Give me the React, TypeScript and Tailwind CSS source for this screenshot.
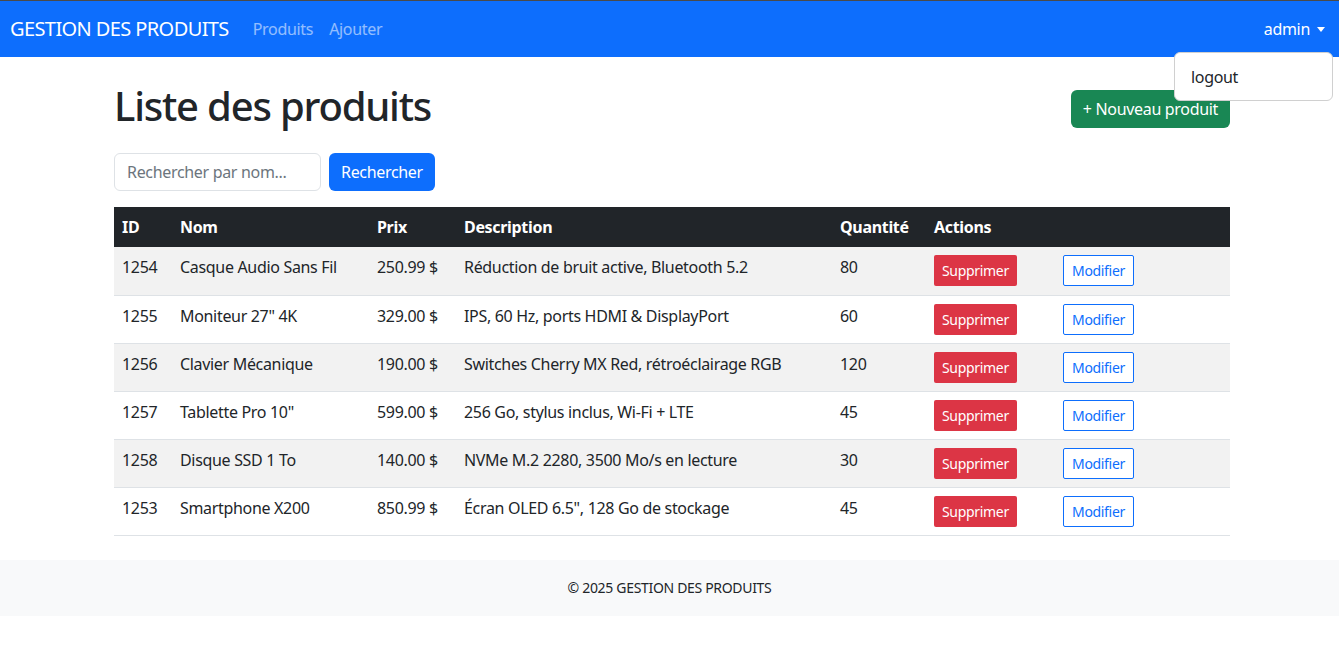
const produits = [
  { id: 1254, nom: "Casque Audio Sans Fil", prix: "250.99 $", description: "Réduction de bruit active, Bluetooth 5.2", quantite: 80 },
  { id: 1255, nom: 'Moniteur 27" 4K', prix: "329.00 $", description: "IPS, 60 Hz, ports HDMI & DisplayPort", quantite: 60 },
  { id: 1256, nom: "Clavier Mécanique", prix: "190.00 $", description: "Switches Cherry MX Red, rétroéclairage RGB", quantite: 120 },
  { id: 1257, nom: 'Tablette Pro 10"', prix: "599.00 $", description: "256 Go, stylus inclus, Wi-Fi + LTE", quantite: 45 },
  { id: 1258, nom: "Disque SSD 1 To", prix: "140.00 $", description: "NVMe M.2 2280, 3500 Mo/s en lecture", quantite: 30 },
  { id: 1253, nom: "Smartphone X200", prix: "850.99 $", description: 'Écran OLED 6.5", 128 Go de stockage', quantite: 45 },
];

export default function App() {
  return (
    <div className="min-h-screen bg-white text-[#212529] font-['Noto_Sans',sans-serif] text-[16px] tracking-[-0.02em]">
      {/* Navbar */}
      <header className="relative border-t border-[#4a4a4a] bg-[#0d6efd]">
        <nav className="h-[56px] px-[10px] flex items-center justify-between">
          <div className="flex items-center">
            <span className="text-white text-[20px] mr-[24px] tracking-[-0.03em]">GESTION DES PRODUITS</span>
            <a className="text-white/55 mr-[16px]">Produits</a>
            <a className="text-white/55">Ajouter</a>
          </div>
          <div className="flex items-center gap-[7px] pr-[4px] text-white">
            admin
            <span className="w-0 h-0 border-x-[4px] border-x-transparent border-t-[5px] border-t-white mt-[1px]"></span>
          </div>
        </nav>
        <div className="absolute right-[6px] top-[51px] w-[159px] h-[49px] bg-white border border-[#d0d0d0] rounded-[6px] z-10 flex items-center pl-[16px]">
          logout
        </div>
      </header>

      {/* Main */}
      <main className="ml-[114px] w-[1116px] pt-[28px]">
        <div className="flex items-start justify-between">
          <h1 className="text-[40px] font-medium leading-[48px] -mt-[3px] mb-[3px] tracking-[-0.03em]">Liste des produits</h1>
          <button className="mt-[5px] h-[38px] px-[12px] bg-[#198754] text-white rounded-[6px]">
            + Nouveau produit
          </button>
        </div>

        <div className="flex gap-[8px] mt-[20px]">
          <input
            placeholder="Rechercher par nom..."
            className="w-[207px] h-[38px] px-[12px] border border-[#dee2e6] rounded-[6px] placeholder:text-[#6c757d] text-[16px]"
          />
          <button className="h-[38px] px-[12px] bg-[#0d6efd] text-white rounded-[6px]">Rechercher</button>
        </div>

        <table className="mt-[16px] w-[1116px] table-fixed border-collapse">
          <colgroup>
            <col className="w-[58px]" />
            <col className="w-[197px]" />
            <col className="w-[87px]" />
            <col className="w-[376px]" />
            <col className="w-[94px]" />
            <col className="w-[129px]" />
            <col className="w-[175px]" />
          </colgroup>
          <thead>
            <tr className="bg-[#212529] text-white text-left">
              <th className="px-[8px] h-[40px] font-bold">ID</th>
              <th className="px-[8px] font-bold">Nom</th>
              <th className="px-[8px] font-bold">Prix</th>
              <th className="px-[8px] font-bold">Description</th>
              <th className="px-[8px] font-bold">Quantité</th>
              <th className="px-[8px] font-bold">Actions</th>
              <th></th>
            </tr>
          </thead>
          <tbody>
            {produits.map((p, i) => (
              <tr key={p.id} className={`${i % 2 === 0 ? "bg-[#f2f2f2]" : "bg-white"} border-b border-[#dee2e6] h-[48px]`}>
                <td className="px-[8px] pt-[8px] align-top leading-[24px]">{p.id}</td>
                <td className="px-[8px] pt-[8px] align-top leading-[24px]">{p.nom}</td>
                <td className="px-[8px] pt-[8px] align-top leading-[24px]">{p.prix}</td>
                <td className="px-[8px] pt-[8px] align-top leading-[24px]">{p.description}</td>
                <td className="px-[8px] pt-[8px] align-top leading-[24px]">{p.quantite}</td>
                <td className="px-[8px] pt-[8px] align-top">
                  <button className="h-[31px] px-[8px] bg-[#dc3545] text-white text-[14px] rounded-[2px]">Supprimer</button>
                </td>
                <td className="px-[8px] pt-[8px] align-top">
                  <button className="h-[31px] px-[8px] border border-[#0d6efd] text-[#0d6efd] text-[14px] rounded-[2px] bg-white">Modifier</button>
                </td>
              </tr>
            ))}
          </tbody>
        </table>
      </main>

      {/* Footer */}
      <footer className="mt-[24px] h-[56px] bg-[#f8f9fa] flex items-center justify-center text-[14px]">
        © 2025 GESTION DES PRODUITS
      </footer>
    </div>
  );
}
